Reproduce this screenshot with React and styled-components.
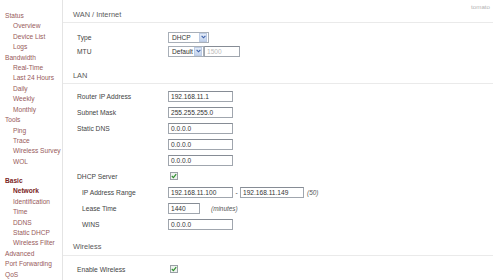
import React from "react";
import styled, { createGlobalStyle } from "styled-components";

const Global = createGlobalStyle`
  html, body { margin: 0; padding: 0; background: #fff; }
  body { font-family: "Liberation Sans", Arial, sans-serif; }
  * { box-sizing: border-box; }
`;

const Page = styled.div`
  display: flex;
  width: 493px;
  height: 280px;
  overflow: hidden;
  background: #fff;
`;

const Nav = styled.nav`
  width: 63px;
  flex: none;
  border-right: 1px solid #e4e4e4;
  padding-top: 10.8px;
  display: flex;
  flex-direction: column;
`;

const NavGroup = styled.div`
  display: flex;
  flex-direction: column;
  margin-top: ${(p) => (p.$gap ? "8.5px" : "0")};
`;

const NavItem = styled.div`
  font-size: 6.6px;
  line-height: 10.45px;
  height: 10.45px;
  white-space: nowrap;
  padding-left: ${(p) => (p.$sub ? "13px" : "5px")};
  color: ${(p) => (p.$active ? "#7a2424" : "#975a5a")};
  font-weight: ${(p) => (p.$active ? "bold" : "normal")};
`;

const Main = styled.main`
  flex: 1;
  position: relative;
  display: flex;
  flex-direction: column;
`;

const Brand = styled.div`
  position: absolute;
  top: 3px;
  right: 3px;
  font-size: 6.2px;
  color: #b4b4b4;
`;

const SectionTitle = styled.div`
  padding: ${(p) => p.$top}px 0 ${(p) => p.$bottom}px 10px;
  font-size: 7.4px;
  line-height: 9px;
  color: #5a5a5a;
  border-bottom: 1px solid #eaeaea;
`;

const Rows = styled.div`
  display: flex;
  flex-direction: column;
  padding-top: ${(p) => p.$top}px;
`;

const Row = styled.div`
  display: flex;
  align-items: center;
  height: ${(p) => p.$h}px;
`;

const Label = styled.div`
  width: ${(p) => (p.$indent ? "86px" : "91px")};
  margin-left: ${(p) => (p.$indent ? "19px" : "14px")};
  font-size: 6.7px;
  color: #444;
  white-space: nowrap;
`;

const Field = styled.div`
  display: flex;
  align-items: center;
`;

const Input = styled.div`
  width: ${(p) => p.$w}px;
  height: 11px;
  border: 1px solid #a0a6ae;
  border-top-color: #868c95;
  background: #fff;
  font-size: 6.6px;
  line-height: 9px;
  padding-left: 2px;
  color: ${(p) => (p.$disabled ? "#bcbcbc" : "#333")};
  white-space: nowrap;
  overflow: hidden;
`;

const SelectBox = styled.div`
  width: ${(p) => p.$w}px;
  height: 11px;
  border: 1px solid #a8afb8;
  background: #fff;
  display: flex;
  align-items: stretch;
`;

const SelectText = styled.div`
  flex: 1;
  font-size: 6.6px;
  line-height: 9px;
  padding-left: 3px;
  color: #333;
  white-space: nowrap;
`;

const SelectArrow = styled.div`
  width: 8px;
  margin: 0 1px 0 0;
  background: linear-gradient(#e4ecf8, #c3d3ec);
  border: 1px solid #bccbe4;
  display: flex;
  align-items: center;
  justify-content: center;
`;

const Note = styled.span`
  font-size: 6.4px;
  font-style: italic;
  color: #555;
  margin-left: ${(p) => p.$ml}px;
`;

const Dash = styled.span`
  font-size: 6.6px;
  color: #444;
  width: 7px;
  text-align: center;
`;

const Check = styled.div`
  width: 8px;
  height: 8px;
  margin-left: 2px;
  border: 1px solid #9aa0a6;
  background: #eef2ee;
  display: flex;
  align-items: center;
  justify-content: center;
`;

const Chevron = () => (
  <svg width="5" height="4" viewBox="0 0 5 4">
    <path d="M0.6 0.8 L2.5 2.8 L4.4 0.8" fill="none" stroke="#3b5fa8" strokeWidth="1.1" />
  </svg>
);

const Select = ({ w, children }) => (
  <SelectBox $w={w}>
    <SelectText>{children}</SelectText>
    <SelectArrow>
      <Chevron />
    </SelectArrow>
  </SelectBox>
);

const Checkbox = () => (
  <Check>
    <svg width="6" height="6" viewBox="0 0 6 6">
      <path d="M0.8 3 L2.4 4.6 L5.2 1.2" fill="none" stroke="#2f8f2f" strokeWidth="1.2" />
    </svg>
  </Check>
);

const nav = [
  [
    { t: "Status" },
    { t: "Overview", s: 1 },
    { t: "Device List", s: 1 },
    { t: "Logs", s: 1 },
    { t: "Bandwidth" },
    { t: "Real-Time", s: 1 },
    { t: "Last 24 Hours", s: 1 },
    { t: "Daily", s: 1 },
    { t: "Weekly", s: 1 },
    { t: "Monthly", s: 1 },
    { t: "Tools" },
    { t: "Ping", s: 1 },
    { t: "Trace", s: 1 },
    { t: "Wireless Survey", s: 1 },
    { t: "WOL", s: 1 },
  ],
  [
    { t: "Basic", a: 1 },
    { t: "Network", s: 1, a: 1 },
    { t: "Identification", s: 1 },
    { t: "Time", s: 1 },
    { t: "DDNS", s: 1 },
    { t: "Static DHCP", s: 1 },
    { t: "Wireless Filter", s: 1 },
    { t: "Advanced" },
    { t: "Port Forwarding" },
    { t: "QoS" },
  ],
];

export default function App() {
  return (
    <>
      <Global />
      <Page>
        <Nav>
          {nav.map((g, gi) => (
            <NavGroup key={gi} $gap={gi > 0}>
              {g.map((it) => (
                <NavItem key={it.t} $sub={!!it.s} $active={!!it.a}>
                  {it.t}
                </NavItem>
              ))}
            </NavGroup>
          ))}
        </Nav>
        <Main>
          <Brand>tomato</Brand>

          <SectionTitle $top={10} $bottom={3}>WAN / Internet</SectionTitle>
          <Rows $top={7}>
            <Row $h={14}>
              <Label>Type</Label>
              <Field>
                <Select w={41}>DHCP</Select>
              </Field>
            </Row>
            <Row $h={14}>
              <Label>MTU</Label>
              <Field>
                <Select w={36}>Default</Select>
                <Input $w={36} $disabled>1500</Input>
              </Field>
            </Row>
          </Rows>

          <SectionTitle $top={13} $bottom={3}>LAN</SectionTitle>
          <Rows $top={4}>
            <Row $h={16}>
              <Label>Router IP Address</Label>
              <Input $w={65}>192.168.11.1</Input>
            </Row>
            <Row $h={16}>
              <Label>Subnet Mask</Label>
              <Input $w={65}>255.255.255.0</Input>
            </Row>
            <Row $h={16}>
              <Label>Static DNS</Label>
              <Input $w={65}>0.0.0.0</Input>
            </Row>
            <Row $h={16}>
              <Label />
              <Input $w={65}>0.0.0.0</Input>
            </Row>
            <Row $h={16}>
              <Label />
              <Input $w={65}>0.0.0.0</Input>
            </Row>
            <Row $h={16}>
              <Label>DHCP Server</Label>
              <Checkbox />
            </Row>
            <Row $h={16}>
              <Label $indent>IP Address Range</Label>
              <Field>
                <Input $w={65}>192.168.11.100</Input>
                <Dash>-</Dash>
                <Input $w={64}>192.168.11.149</Input>
                <Note $ml={3}>(50)</Note>
              </Field>
            </Row>
            <Row $h={16}>
              <Label $indent>Lease Time</Label>
              <Field>
                <Input $w={32}>1440</Input>
                <Note $ml={11}>(minutes)</Note>
              </Field>
            </Row>
            <Row $h={16}>
              <Label $indent>WINS</Label>
              <Input $w={65}>0.0.0.0</Input>
            </Row>
          </Rows>

          <SectionTitle $top={10} $bottom={4}>Wireless</SectionTitle>
          <Rows $top={5}>
            <Row $h={16}>
              <Label>Enable Wireless</Label>
              <Checkbox />
            </Row>
          </Rows>
        </Main>
      </Page>
    </>
  );
}
